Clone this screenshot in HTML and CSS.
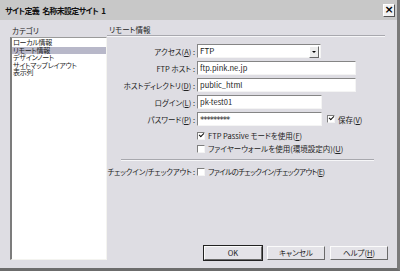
FILE: index.html
```html
<!DOCTYPE html>
<html lang="ja">
<head>
    <meta charset="UTF-8">
    <title>サイト定義</title>
    <link rel="stylesheet" href="styles.css">
</head>
<body>
    <div class="window">
        <div class="titlebar">
            <span class="titletext">サイト定義 名称未設定サイト 1</span>
            <span class="closebtn">×</span>
        </div>
        <div class="main">
            <div class="leftcol">
                <p class="grouplabel">カテゴリ</p>
                <div class="listbox">
                    <div class="item">ローカル情報</div>
                    <div class="item selected">リモート情報</div>
                    <div class="item">デザインノート</div>
                    <div class="item">サイトマップレイアウト</div>
                    <div class="item">表示列</div>
                </div>
            </div>
            <div class="rightcol">
                <p class="heading">リモート情報</p>
                <div class="form">
                    <div class="row">
                        <span class="label">アクセス(<u>A</u>) :</span>
                        <div class="select">FTP<span class="dropbtn"></span></div>
                    </div>
                    <div class="row">
                        <span class="label">FTP ホスト :</span>
                        <div class="textbox wide">ftp.pink.ne.jp</div>
                    </div>
                    <div class="row">
                        <span class="label">ホストディレクトリ(<u>D</u>) :</span>
                        <div class="textbox wide">public_html</div>
                    </div>
                    <div class="row">
                        <span class="label">ログイン(<u>L</u>) :</span>
                        <div class="textbox">pk-test01</div>
                    </div>
                    <div class="row">
                        <span class="label">パスワード(<u>P</u>) :</span>
                        <div class="textbox stars">*********</div>
                        <span class="check checked"></span>
                        <span class="checktext">保存(<u>V</u>)</span>
                    </div>
                    <div class="checkrow">
                        <span class="check checked"></span>
                        <span class="checktext">FTP Passive モードを使用(<u>F</u>)</span>
                    </div>
                    <div class="checkrow">
                        <span class="check"></span>
                        <span class="checktext">ファイヤーウォールを使用(環境設定内)(<u>U</u>)</span>
                    </div>
                    <div class="separator"></div>
                    <div class="row short">
                        <span class="label tight">チェックイン/チェックアウト :</span>
                        <span class="check"></span>
                        <span class="checktext tight">ファイルのチェックイン/チェックアウト(<u>E</u>)</span>
                    </div>
                </div>
                <div class="buttons">
                    <div class="button default">OK</div>
                    <div class="button">キャンセル</div>
                    <div class="button">ヘルプ(<u>H</u>)</div>
                </div>
            </div>
        </div>
    </div>
</body>
</html>
```

FILE: styles.css
```css
body {
    margin: 0;
    padding: 0;
    background-color: #dedde3;
    font-family: "Noto Sans CJK JP", "Liberation Sans", sans-serif;
    font-feature-settings: "palt";
    color: #222;
}

p {
    margin: 0;
}

u {
    text-underline-offset: 1px;
}

.window {
    width: 397px;
    height: 268px;
    border-right: 3px solid #7a7a7a;
    border-bottom: 3px solid #6c6c6c;
    display: flex;
    flex-direction: column;
}

.titlebar {
    height: 20px;
    background-color: #c8c8c8;
    display: flex;
    align-items: center;
    justify-content: space-between;
    padding-left: 5px;
    padding-right: 2px;
    flex-shrink: 0;
}

.titletext {
    font-size: 8px;
    font-weight: bold;
    color: #111;
    letter-spacing: -0.7px;
    word-spacing: 2px;
}

.closebtn {
    width: 10px;
    height: 11px;
    background-color: #f2f2f2;
    border: 1px solid;
    border-color: #fff #555 #555 #fff;
    font-size: 11px;
    line-height: 10px;
    font-weight: bold;
    text-align: center;
    color: #000;
    font-family: "DejaVu Sans", sans-serif;
}

.main {
    flex: 1;
    display: flex;
    padding: 4px 0 0 10px;
}

.leftcol {
    width: 97px;
    display: flex;
    flex-direction: column;
    padding-bottom: 8px;
}

.grouplabel {
    height: 13px;
    line-height: 13px;
    font-size: 7.5px;
    padding-left: 2px;
}

.listbox {
    flex: 1;
    background-color: #fff;
    border-left: 2px solid #7c7c7c;
    border-top: 1px solid #9a9a9a;
    border-right: 1px solid #f4f4f0;
    border-bottom: 1px solid #f4f4f0;
    padding-top: 1px;
}

.item {
    height: 7.5px;
    line-height: 7.5px;
    font-size: 7px;
    letter-spacing: -0.3px;
    padding-left: 1px;
    white-space: nowrap;
}

.item.selected {
    background-color: #b8b8c9;
}

.rightcol {
    flex: 1;
    display: flex;
    flex-direction: column;
    padding-bottom: 8px;
}

.heading {
    height: 11px;
    line-height: 11px;
    font-size: 7.5px;
    padding-left: 2px;
    margin-right: 12px;
    border-bottom: 1px solid #a8a8ae;
    box-shadow: 0 1px 0 #f6f6f8;
}

.form {
    margin-top: 8px;
    display: flex;
    flex-direction: column;
}

.row {
    height: 14px;
    display: flex;
    align-items: center;
    margin-bottom: 3px;
}

.row.short {
    height: 13px;
}

.label {
    width: 90px;
    flex-shrink: 0;
    text-align: right;
    font-size: 7.5px;
    padding-right: 2px;
    box-sizing: border-box;
    white-space: nowrap;
}

.label.tight {
    letter-spacing: -0.2px;
}

.textbox,
.select {
    width: 125px;
    height: 14px;
    box-sizing: border-box;
    background-color: #fff;
    border: 1px solid;
    border-color: #858585 #f4f4f4 #f4f4f4 #858585;
    font-size: 7.5px;
    line-height: 12px;
    padding-left: 2px;
    white-space: nowrap;
}

.textbox.wide {
    width: 159px;
}

.textbox.stars {
    font-size: 8.5px;
    font-family: "DejaVu Sans", sans-serif;
    letter-spacing: -1px;
    line-height: 14px;
}

.select {
    width: 124px;
    position: relative;
    font-size: 8px;
}

.dropbtn {
    position: absolute;
    right: 1px;
    top: 1px;
    width: 8px;
    height: 10px;
    background-color: #ececec;
    border: 1px solid;
    border-color: #fff #666 #666 #fff;
}

.dropbtn::after {
    content: "";
    position: absolute;
    left: 2px;
    top: 4px;
    border-left: 2px solid transparent;
    border-right: 2px solid transparent;
    border-top: 2px solid #000;
}

.check {
    width: 8px;
    height: 8px;
    box-sizing: border-box;
    flex-shrink: 0;
    background-color: #fff;
    border: 1px solid;
    border-color: #7e7e7e #f4f4f4 #f4f4f4 #7e7e7e;
    position: relative;
}

.row .check {
    margin-left: 5px;
}

.row.short .check {
    margin-left: 0;
}

.check.checked::after {
    content: "";
    position: absolute;
    left: 1px;
    top: 0px;
    width: 4px;
    height: 2px;
    border-left: 1.3px solid #111;
    border-bottom: 1.3px solid #111;
    transform: rotate(-45deg);
}

.checktext {
    font-size: 7.5px;
    margin-left: 3px;
    white-space: nowrap;
}

.checktext.tight {
    letter-spacing: -0.6px;
}

.checkrow {
    height: 13px;
    display: flex;
    align-items: center;
    padding-left: 90px;
}

.separator {
    margin: 4px 0 4px 14px;
    width: 253px;
    height: 0;
    border-top: 1px solid #a8a8ae;
    border-bottom: 1px solid #f6f6f8;
}

.buttons {
    margin-top: auto;
    display: flex;
    justify-content: flex-end;
    gap: 5px;
    padding-right: 9px;
}

.button {
    width: 58px;
    height: 14px;
    box-sizing: border-box;
    background-color: #e4e3e8;
    border: 1px solid;
    border-color: #fbfbfb #6a6a6a #6a6a6a #fbfbfb;
    font-size: 7.5px;
    line-height: 12px;
    text-align: center;
}

.button.default {
    outline: 1px solid #222;
}
```
